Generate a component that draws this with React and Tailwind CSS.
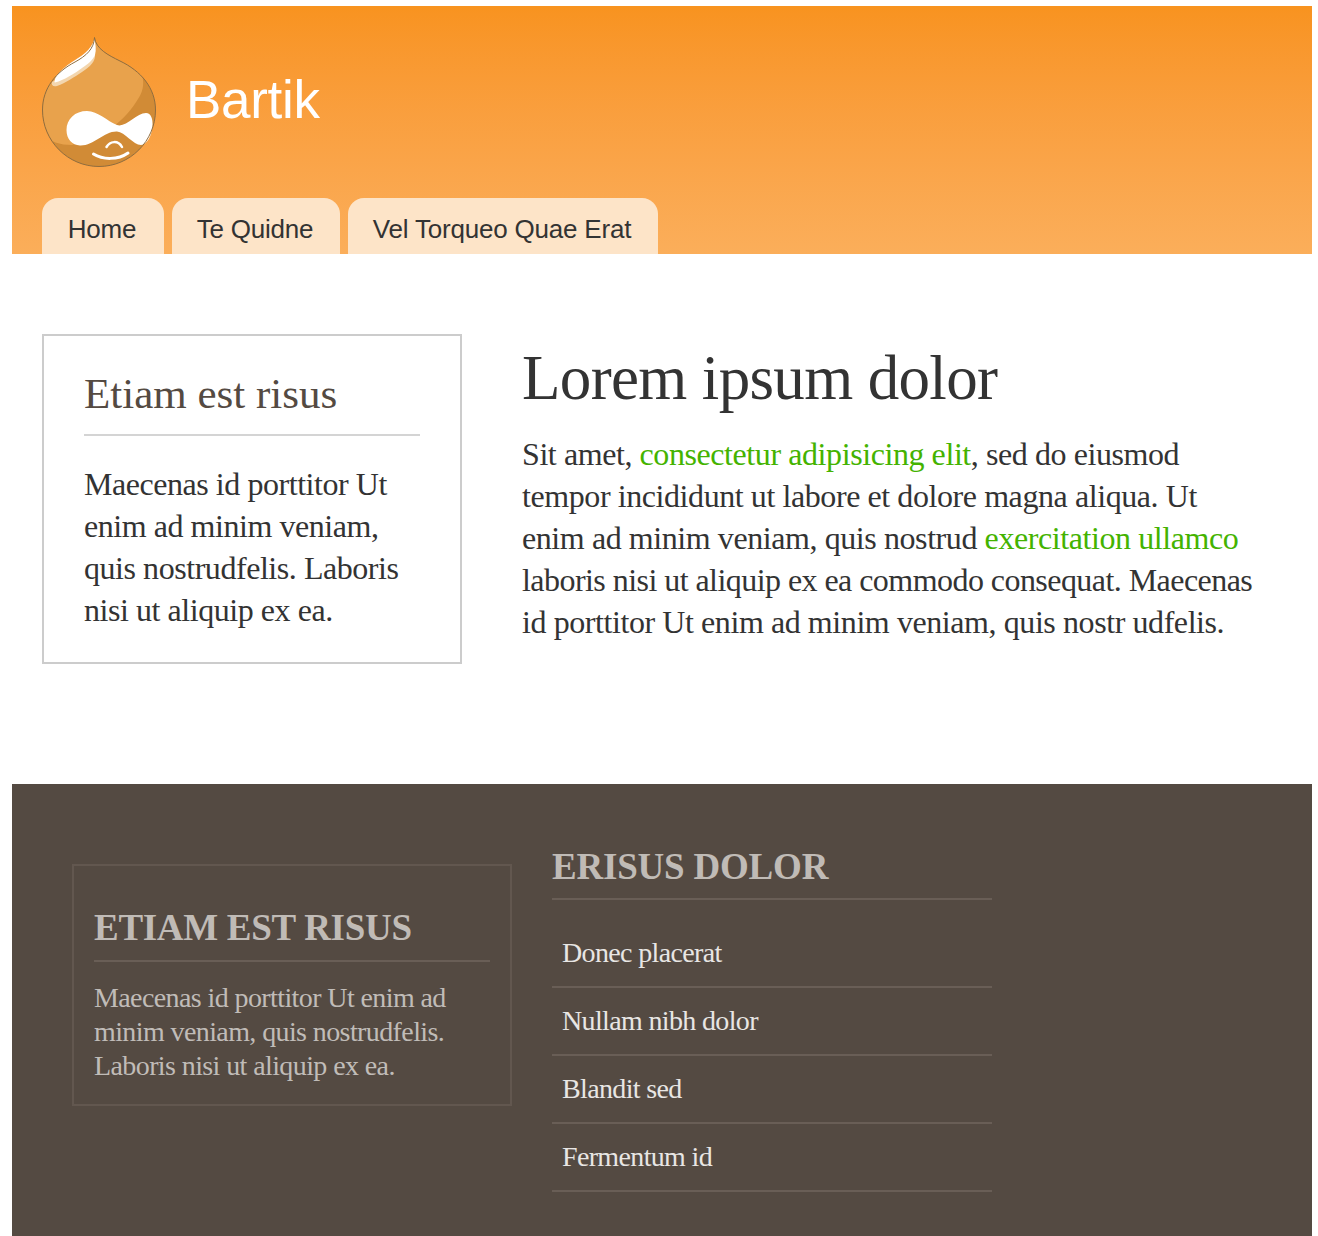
const serif = "font-['Liberation_Serif',serif]";

const footerLinks = ["Donec placerat", "Nullam nibh dolor", "Blandit sed", "Fermentum id"];

function Logo() {
  const drop =
    "M52.5 0.5C54 12 66 18 78 24C99 34 113.5 51 113.5 73C113.5 104 88 129.5 57 129.5C26 129.5 0.5 104 0.5 73C0.5 51 14 35 33 25C44 19 52 12 52.5 0.5Z";
  return (
    <svg width="114" height="130" viewBox="0 0 114 130" className="shrink-0">
      <defs>
        <clipPath id="drop">
          <path d={drop} />
        </clipPath>
      </defs>
      <path d={drop} fill="#d18b36" />
      <g clipPath="url(#drop)">
        <path d="M0 0H114V26L100 38C103 48 100 56 96 62C90 72 82 82 68 92L30 108C18 108 8 105 0 96Z" fill="#e8a24c" />
      </g>
      <path d="M53 17C54 24 48 30 40 35C32 40 24 46 15 49C11 50 9 48 10 45L30 34Z" fill="#f3d6ae" />
      <path d="M52.5 1.5C53.5 7 54.5 13 53 18C51 23 46 27 40 31C32 37 22 43 13 45.5C12 45 13 41 15 38C19 33 24 29 30 25C38 20 50 13 52.5 1.5Z" fill="#fff" />
      <path
        d="M24.5 93C24.5 82 33 74 45 74C56 74 65 84 75 88C84 91 94 76 104 76C109 76 111 82 110.5 89C110 98 105 108 99 108C91 108 83 95 75 94.5C62 94 52 109 38 108.5C30 108 24.5 102 24.5 93Z"
        fill="#fff"
      />
      <path d="M51.5 117C61 123 76 123 86 116" fill="none" stroke="#fff" strokeWidth="3" strokeLinecap="round" />
      <path d="M64.5 110C68 104 76 103 80 110" fill="none" stroke="#fff" strokeWidth="2.5" strokeLinecap="round" />
      <path d={drop} fill="none" stroke="#8f6d3f" strokeWidth="1" />
    </svg>
  );
}

function Tab({ label, className }) {
  return (
    <a className={`flex h-14 items-center justify-center rounded-t-2xl bg-[#fde4c8] pt-1.5 pr-0.5 text-[26px] tracking-[-0.2px] text-[#333333] ${className}`}>
      {label}
    </a>
  );
}

export default function App() {
  return (
    <div className="h-[1236px] w-[1318px] overflow-hidden bg-white pt-1.5 pr-1.5 pl-3">
      <header className="h-[248px] bg-gradient-to-b from-[#f8931f] to-[#fbae5a] pt-[31px] pl-[30px] font-['Liberation_Sans',sans-serif]">
        <div className="flex h-[130px] items-center gap-[30px]">
          <Logo />
          <span className="pb-1 text-[53px] tracking-[-0.3px] text-white">Bartik</span>
        </div>
        <nav className="mt-[31px] flex gap-2">
          <Tab label="Home" className="w-[122px]" />
          <Tab label="Te Quidne" className="w-[168px]" />
          <Tab label="Vel Torqueo Quae Erat" className="w-[310px]" />
        </nav>
      </header>

      <main className={`flex h-[530px] items-start gap-[60px] pt-20 pl-[30px] ${serif}`}>
        <aside className="h-[330px] w-[420px] border-2 border-[#cccccc] px-10 pt-[33px]">
          <h2 className="border-b-2 border-[#d4d4d4] pb-[15px] text-[43px] leading-[50px] text-[#544a42]">
            Etiam est risus
          </h2>
          <p className="mt-[27px] text-[32px] leading-[42px] tracking-[-0.45px] text-[#333333]">
            Maecenas id porttitor Ut
            <br />
            enim ad minim veniam,
            <br />
            quis nostrudfelis. Laboris
            <br />
            nisi ut aliquip ex ea.
          </p>
        </aside>
        <article className="pt-1">
          <h1 className="text-[63px] leading-[80px] tracking-[-0.65px] text-[#333333]">Lorem ipsum dolor</h1>
          <p className="mt-[15px] text-[32px] leading-[42px] tracking-[-0.42px] text-[#333333]">
            Sit amet, <a className="text-[#44b300]">consectetur adipisicing elit</a>, sed do eiusmod
            <br />
            tempor incididunt ut labore et dolore magna aliqua. Ut
            <br />
            enim ad minim veniam, quis nostrud <a className="text-[#44b300]">exercitation ullamco</a>
            <br />
            <span className="tracking-[-0.55px]">laboris nisi ut aliquip ex ea commodo consequat. Maecenas</span>
            <br />
            id porttitor Ut enim ad minim veniam, quis nostr udfelis.
          </p>
        </article>
      </main>

      <footer className={`flex h-[452px] items-start gap-10 bg-[#544a42] pl-[60px] ${serif}`}>
        <section className="mt-20 h-[242px] w-[440px] border-2 border-[#62574f] px-5 pt-10">
          <h2 className="border-b-2 border-[#695e56] pb-2.5 text-[37px] leading-[44px] font-bold tracking-[-0.3px] text-[#c0bbb6]">ETIAM EST RISUS</h2>
          <p className="mt-[19px] text-[28px] leading-[34px] tracking-[-0.6px] text-[#c0bcb8]">
            Maecenas id porttitor Ut enim ad
            <br />
            minim veniam, quis nostrudfelis.
            <br />
            Laboris nisi ut aliquip ex ea.
          </p>
        </section>
        <section className="mt-[61px] w-[440px]">
          <h2 className="border-b-2 border-[#695e56] pb-[9px] text-[37px] leading-[44px] font-bold tracking-[-0.2px] text-[#c0bbb6]">ERISUS DOLOR</h2>
          <ul className="pt-5">
            {footerLinks.map((link) => (
              <li key={link} className="flex h-[68px] items-center border-b-2 border-[#695e56] pl-2.5 text-[28px] tracking-[-0.65px] text-[#e8e6e4]">
                {link}
              </li>
            ))}
          </ul>
        </section>
      </footer>
    </div>
  );
}
